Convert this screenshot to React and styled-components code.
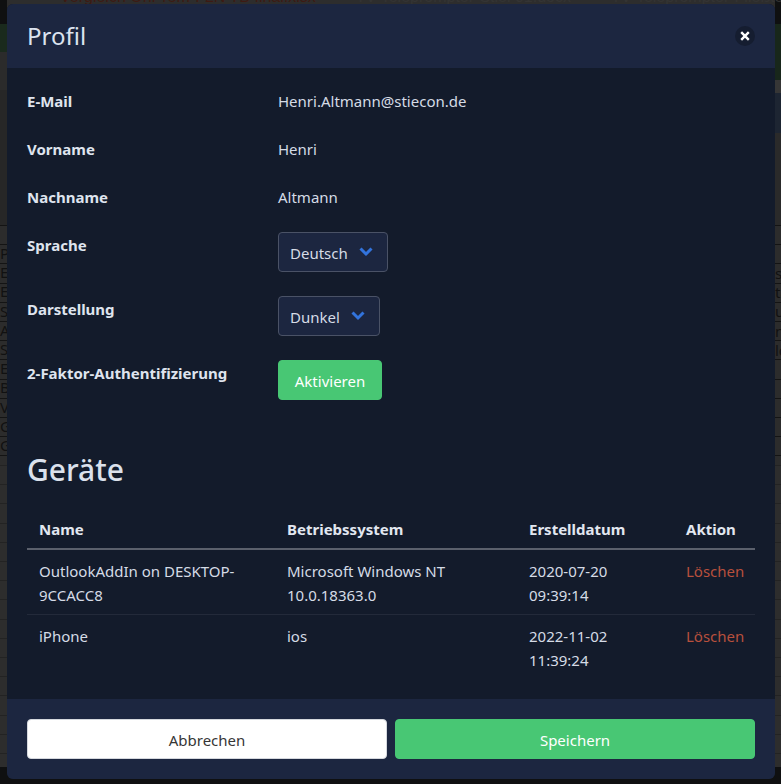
import React from 'react';
import styled, { createGlobalStyle } from 'styled-components';

const GlobalStyle = createGlobalStyle`
  html, body {
    margin: 0;
    height: 100%;
    background: #0f1011;
  }
  body {
    font-family: "Noto Sans", "Open Sans", sans-serif;
    font-size: 15px;
    line-height: 24px;
    color: #dfe4ee;
  }
`;

const rowLines = `
  repeating-linear-gradient(
    to bottom,
    #141414 0 1px,
    #2c2c2c 1px 19.2px
  )
`;

const softLines = `
  repeating-linear-gradient(
    to bottom,
    #232323 0 1px,
    #2d2d2d 1px 19.2px
  )
`;

// dimmed page that shows round the modal
const Page = styled.div`
  position: relative;
  width: 781px;
  height: 784px;
  box-sizing: border-box;
  padding: 4px 6px 5px 7px;
  overflow: hidden;
  background:
    linear-gradient(to bottom, #0f1011 0 24px, #1a2a1d 24px 52px, #2b2b2b 52px 90px, #272727 90px 225px, transparent 225px) left top / 7px 100% no-repeat,
    linear-gradient(to bottom, #0f1011 0 24px, #18271b 24px 80px, #363636 80px 93px, #1d2532 93px 133px, #2a2a2a 133px 225px, transparent 225px) right top / 6px 100% no-repeat,
    linear-gradient(to bottom, transparent 0 767px, #0f1011 767px) 0 0 / 100% 100% no-repeat,
    ${rowLines} 0 225px / 100% 240px no-repeat,
    ${softLines} 0 465px / 100% 302px no-repeat,
    #2d2d2d;
`;

const TabStrip = styled.div`
  position: absolute;
  top: -15px;
  left: 60px;
  display: flex;
  gap: 40px;
  font-family: "Liberation Sans", sans-serif;
  font-size: 16px;
  white-space: nowrap;
`;

const TabName = styled.span`
  color: ${props => props.$red ? '#3d1a13' : '#343434'};
`;

const GhostColumn = styled.div`
  position: absolute;
  top: ${props => props.$top}px;
  left: ${props => props.$left}px;
  display: flex;
  flex-direction: column;
  font-size: 15px;
  line-height: 19.2px;
  color: #111;
`;

const Modal = styled.div`
  position: relative;
  display: flex;
  flex-direction: column;
  height: 775px;
  border-radius: 6px;
  overflow: hidden;
  background: #131b2b;
`;

const Header = styled.header`
  display: flex;
  align-items: center;
  justify-content: space-between;
  height: 64px;
  padding: 0 20px;
  flex-shrink: 0;
  background: #1c2640;
`;

const Title = styled.h1`
  margin: 0;
  font-size: 24px;
  font-weight: 400;
  line-height: 30px;
  color: #dbe3ef;
`;

const CloseButton = styled.button`
  display: flex;
  align-items: center;
  justify-content: center;
  width: 20px;
  height: 20px;
  margin-bottom: 1px;
  padding: 0;
  border: 0;
  border-radius: 50%;
  background: #151d30;
  cursor: pointer;
`;

const Body = styled.section`
  flex: 1;
  padding: 20px 20px 0;
`;

const FieldRow = styled.div`
  display: grid;
  grid-template-columns: 251px 1fr;
  height: 40px;
  margin-bottom: ${props => props.$control ? 24 : 8}px;
`;

const Label = styled.div`
  padding-top: 1px;
  font-weight: 700;
  color: #dfe4ee;
`;

const Value = styled.div`
  padding-top: 1px;
  color: #d5dbe6;
`;

const SelectBox = styled.div`
  display: inline-flex;
  align-items: center;
  box-sizing: border-box;
  height: 40px;
  width: ${props => props.$width}px;
  padding-left: 11px;
  gap: 11px;
  border: 1px solid #4a5266;
  border-radius: 4px;
  background: #1c2640;
  color: #d5dbe6;
`;

const SelectText = styled.span`
  padding-top: 2px;
`;

const Button = styled.button`
  height: 40px;
  box-sizing: border-box;
  padding: 2px 0 0;
  border: 1px solid ${props => props.$white ? '#d5d8de' : '#48c774'};
  border-radius: 4px;
  background: ${props => props.$white ? '#fff' : '#48c774'};
  color: ${props => props.$white ? '#363636' : '#fff'};
  font-family: inherit;
  font-size: 15px;
  line-height: 24px;
  cursor: pointer;
`;

const ActivateButton = styled(Button)`
  width: 104px;
`;

const Heading = styled.h2`
  margin: 47px 0 0;
  height: 45px;
  font-size: 30px;
  font-weight: 500;
  line-height: 45px;
  color: #dbe1ec;
`;

const Table = styled.table`
  width: 728px;
  margin-top: 19px;
  table-layout: fixed;
  border-collapse: collapse;
`;

const HeadCell = styled.th`
  box-sizing: border-box;
  width: ${props => props.$width}px;
  height: 38px;
  padding: 0 12px 2px;
  border-bottom: 2px solid #5b606c;
  text-align: left;
  font-weight: 700;
  color: #e2e7f0;
`;

const BodyRow = styled.tr`
  &:not(:last-child) td {
    border-bottom: 1px solid #232a3a;
  }
`;

const Cell = styled.td`
  padding: 9px 12px 7px;
  vertical-align: top;
  color: #d5dbe6;
`;

const DeleteLink = styled.a`
  color: #b8503d;
  cursor: pointer;
`;

const Footer = styled.footer`
  display: grid;
  grid-template-columns: 1fr 1fr;
  gap: 8px;
  height: 40px;
  padding: 20px;
  flex-shrink: 0;
  background: #1c2640;
`;

const Chevron = () => (
  <svg width="14" height="10" viewBox="0 0 14 10" fill="none" aria-hidden="true">
    <path d="M1.5 1.5 L7 7 L12.5 1.5" stroke="#3273dc" strokeWidth="3" />
  </svg>
);

const CloseIcon = () => (
  <svg width="10" height="10" viewBox="0 0 10 10" aria-hidden="true">
    <path d="M1.2 1.2 L8.8 8.8 M8.8 1.2 L1.2 8.8" stroke="#fff" strokeWidth="2.4" />
  </svg>
);

const devices = [
  { name: 'OutlookAddIn on DESKTOP-9CCACC8', os: 'Microsoft Windows NT 10.0.18363.0', date: '2020-07-20 09:39:14' },
  { name: 'iPhone', os: 'ios', date: '2022-11-02 11:39:24' },
];

const leftGhosts = ['Pa', 'Ex', 'Ex', 'Se', 'Ar', 'Sp', 'Ei', 'Ba', 'V', 'G', 'G'];
const rightGhosts = ['s', 'ta', 'u', 'n', 'lo'];

export default function App() {
  return (
    <Page>
      <GlobalStyle />
      <TabStrip>
        <TabName $red>Vergleich OnPrem-F2N TB final.xlsx</TabName>
        <TabName>TV-Teleprompter-Stiel 01.docx</TabName>
        <TabName>TV-Teleprompter-Fließtext</TabName>
      </TabStrip>
      <GhostColumn $top={244} $left={0}>
        {leftGhosts.map((text, i) => <span key={i}>{text}</span>)}
      </GhostColumn>
      <GhostColumn $top={264} $left={775}>
        {rightGhosts.map((text, i) => <span key={i}>{text}</span>)}
      </GhostColumn>
      <Modal>
        <Header>
          <Title>Profil</Title>
          <CloseButton aria-label="Schließen"><CloseIcon /></CloseButton>
        </Header>
        <Body>
          <FieldRow>
            <Label>E-Mail</Label>
            <Value>Henri.Altmann@stiecon.de</Value>
          </FieldRow>
          <FieldRow>
            <Label>Vorname</Label>
            <Value>Henri</Value>
          </FieldRow>
          <FieldRow>
            <Label>Nachname</Label>
            <Value>Altmann</Value>
          </FieldRow>
          <FieldRow $control>
            <Label>Sprache</Label>
            <div>
              <SelectBox $width={110}><SelectText>Deutsch</SelectText> <Chevron /></SelectBox>
            </div>
          </FieldRow>
          <FieldRow $control>
            <Label>Darstellung</Label>
            <div>
              <SelectBox $width={102}><SelectText>Dunkel</SelectText> <Chevron /></SelectBox>
            </div>
          </FieldRow>
          <FieldRow $control>
            <Label>2-Faktor-Authentifizierung</Label>
            <div>
              <ActivateButton>Aktivieren</ActivateButton>
            </div>
          </FieldRow>
          <Heading>Geräte</Heading>
          <Table>
            <thead>
              <tr>
                <HeadCell $width={248}>Name</HeadCell>
                <HeadCell $width={242}>Betriebssystem</HeadCell>
                <HeadCell $width={157}>Erstelldatum</HeadCell>
                <HeadCell $width={81}>Aktion</HeadCell>
              </tr>
            </thead>
            <tbody>
              {devices.map(device => (
                <BodyRow key={device.name}>
                  <Cell>{device.name}</Cell>
                  <Cell>{device.os}</Cell>
                  <Cell>{device.date}</Cell>
                  <Cell><DeleteLink>Löschen</DeleteLink></Cell>
                </BodyRow>
              ))}
            </tbody>
          </Table>
        </Body>
        <Footer>
          <Button $white>Abbrechen</Button>
          <Button>Speichern</Button>
        </Footer>
      </Modal>
    </Page>
  );
}
